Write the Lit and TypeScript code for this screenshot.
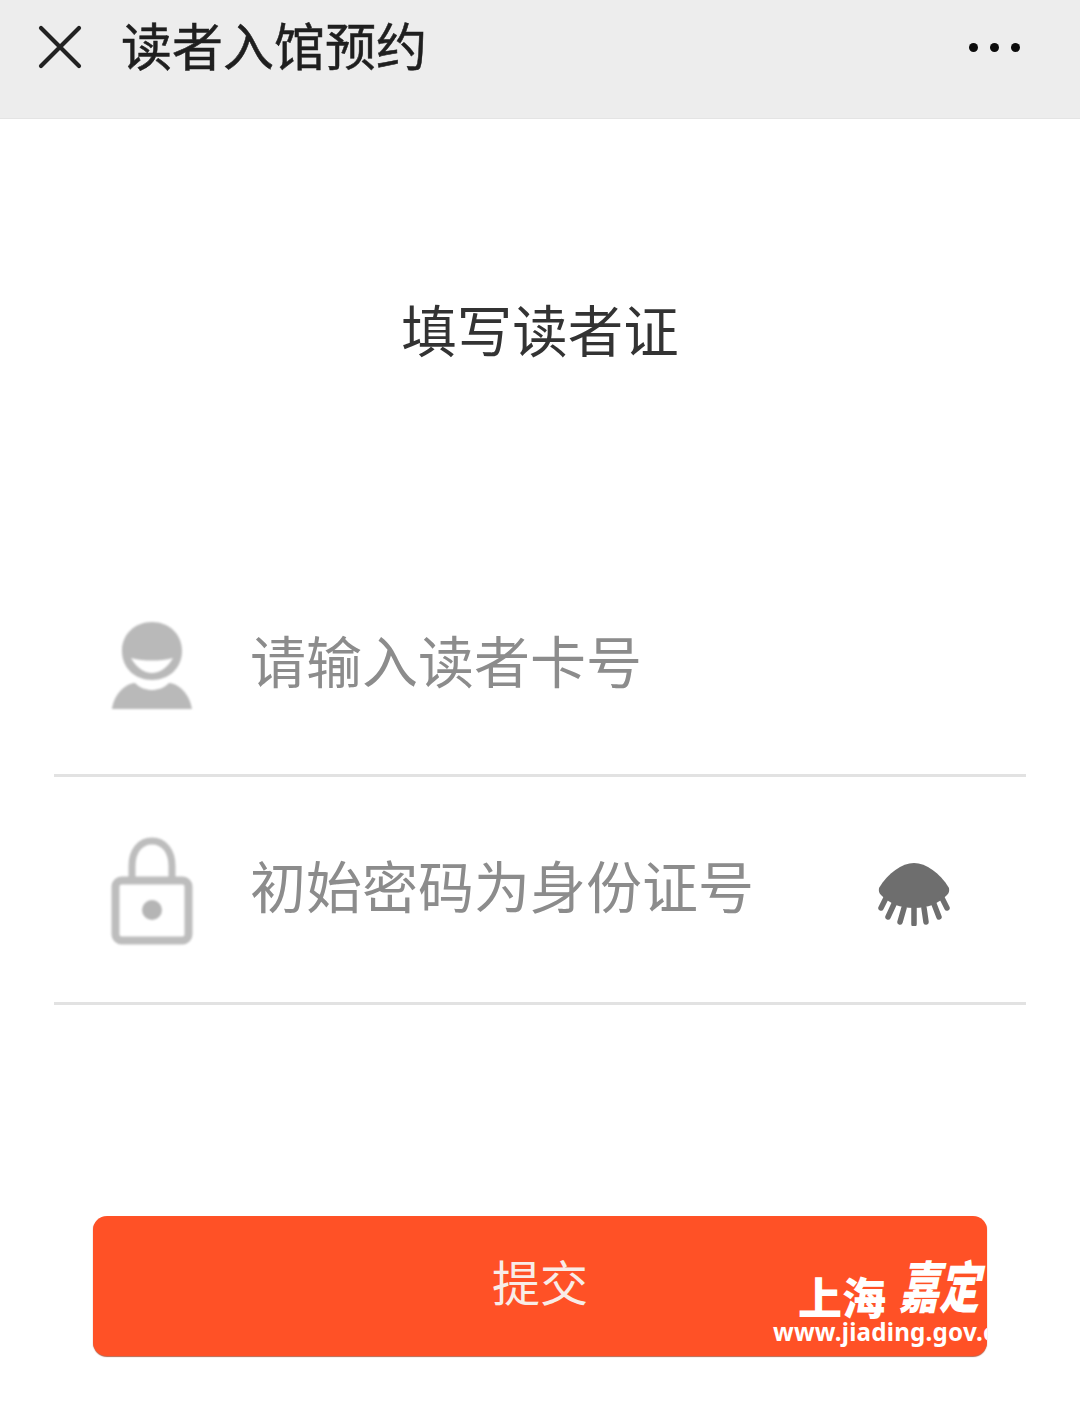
import { LitElement, html, css } from "lit";
import { customElement } from "lit/decorators.js";

@customElement("app-root")
export class AppRoot extends LitElement {
  static styles = css`
    :host { display: block; width: 1080px; height: 1420px; background: #fff; font-family: "Noto Sans CJK SC", "Noto Sans", sans-serif; overflow: hidden; }
    .nav { height: 119px; box-sizing: border-box; background: #ededed; border-bottom: 1px solid #e4e4e4; display: flex; align-items: center; padding: 0 60px 24px 38px; }
    .nav .close { width: 44px; height: 44px; flex: none; }
    .nav h1 { margin: -6px 0 0 39px; font-size: 51px; line-height: 70px; font-weight: 400; color: #1f1f1f; flex: 1; -webkit-text-stroke: 0.5px #1f1f1f; }
    .dots { display: flex; gap: 12px; }
    .dots i { width: 9px; height: 9px; border-radius: 50%; background: #0c0c0c; display: block; }
    .heading { margin: 0; padding-top: 169px; height: 80px; line-height: 80px; text-align: center; font-size: 55.5px; font-weight: 400; color: #333; }
    .form { margin: 0 54px; padding-top: 182px; }
    .row { height: 228px; box-sizing: border-box; border-bottom: 3px solid #e2e2e2; display: flex; align-items: center; padding-left: 57px; padding-top: 4px; }
    .row.first { height: 227px; padding-top: 0; }
    .icon { width: 82px; height: 110px; flex: none; filter: blur(0.8px); margin-top: -2px; }
    .row span { margin-left: 57px; font-size: 56px; line-height: 72px; color: #8c8c8c; margin-top: -16px; flex: 1; }
    .first span { margin-top: -6px; }
    .first .icon { margin-top: 6px; }
    .eye { width: 72px; height: 64px; flex: none; margin-right: 76px; margin-top: 4px; filter: blur(0.7px); }
    .submit { margin: 211px 93px 0; height: 140px; background: #ff5126; border-radius: 14px; box-shadow: 0 1px 1px #b8654d; position: relative; overflow: hidden; display: flex; justify-content: center; align-items: center; color: #f8ece7; font-size: 48px; line-height: 64px; }
    .submit b { margin-top: -13px; font-weight: 400; }
    .mark { position: absolute; left: 680px; top: 36px; width: 260px; color: #fff; }
    .mark .sh { position: absolute; left: 25px; top: 19px; font-size: 44px; line-height: 50px; font-weight: 900; }
    .mark .jd { position: absolute; left: 131px; top: 4px; font-size: 40px; line-height: 56px; font-weight: 900; transform: skewX(-12deg) scaleY(1.4); letter-spacing: 0; white-space: nowrap; }
    .mark .url { position: absolute; left: 0; top: 63px; font-family: "Noto Sans", "Open Sans", sans-serif; font-size: 24.2px; line-height: 34px; font-weight: 700; white-space: nowrap; letter-spacing: 0.2px; }
  `;

  render() {
    return html`
      <header class="nav">
        <svg class="close" viewBox="0 0 44 44"><path d="M3 3 L41 41 M41 3 L3 41" stroke="#222" stroke-width="4.2" fill="none" stroke-linecap="round"/></svg>
        <h1>读者入馆预约</h1>
        <div class="dots"><i></i><i></i><i></i></div>
      </header>
      <h2 class="heading">填写读者证</h2>
      <div class="form">
        <div class="row first">
          <svg class="icon" viewBox="0 0 82 110">
            <path fill="#b9b9b9" fill-rule="evenodd" d="M41 12 C58 12 71 24 71 41 C71 58 58 70 41 70 C24 70 11 58 11 41 C11 24 24 12 41 12 Z M20 48 C25 57 33 63 41 63 C49 63 57 57 62 48 C55 50 48 50.5 41 50.5 C34 50.5 27 50 20 48 Z"/>
            <path fill="#b9b9b9" d="M1 99 C3 85 13 74 24 73 C29 78 35 80 41 80 C47 80 53 78 58 73 C69 74 79 85 81 99 Z"/>
          </svg>
          <span>请输入读者卡号</span>
        </div>
        <div class="row">
          <svg class="icon" viewBox="0 0 82 110">
            <path fill="none" stroke="#bdbdbd" stroke-width="7" d="M21 45 V30 C21 15 29 5 41 5 C53 5 61 15 61 30 V45"/>
            <rect x="4.5" y="44.5" width="73" height="60" rx="6" fill="none" stroke="#bdbdbd" stroke-width="8"/>
            <circle cx="41" cy="74" r="10" fill="#b5b5b5"/>
          </svg>
          <span>初始密码为身份证号</span>
          <svg class="eye" viewBox="0 0 72 64">
            <path fill="#6e6e6e" d="M36 1 C48 1 62 11 71 26 C71.5 29 71 31 69 33 C60 42 50 46 36 46 C22 46 12 42 3 33 C1 31 0.5 29 1 26 C10 11 24 1 36 1 Z"/>
            <path fill="none" stroke="#6e6e6e" stroke-width="5.5" stroke-linecap="round" d="M8 36 L3 46 M16 42 L10 55 M26 46 L22 60 M36 46 L36 62 M46 46 L48 60 M56 42 L61 55 M64 36 L69 46"/>
          </svg>
        </div>
      </div>
      <div class="submit">
        <b>提交</b>
        <div class="mark">
          <div class="sh">上海</div>
          <div class="jd">嘉定</div>
          <div class="url">www.jiading.gov.cn</div>
        </div>
      </div>
    `;
  }
}
